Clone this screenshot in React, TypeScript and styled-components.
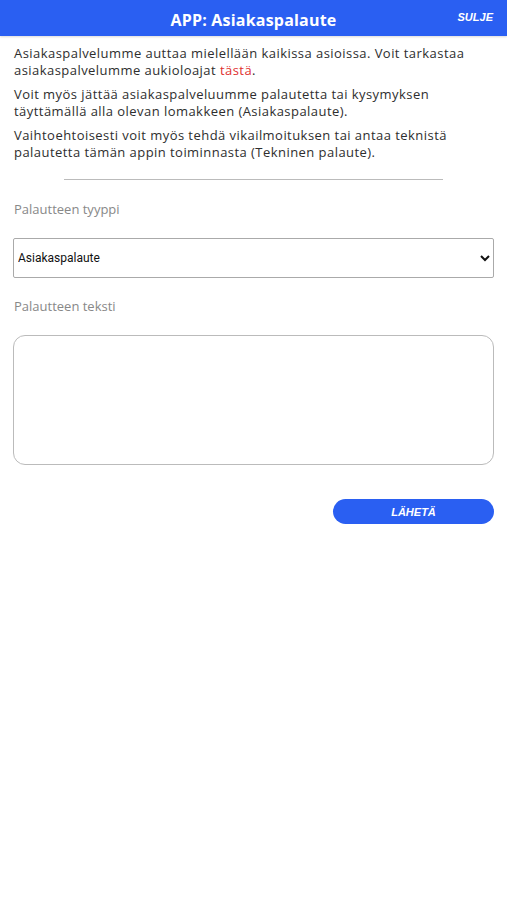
import React from 'react';
import styled, { createGlobalStyle } from 'styled-components';

const GlobalStyle = createGlobalStyle`
  html, body {
    margin: 0;
    padding: 0;
    background: #ffffff;
  }
  body {
    font-family: 'Open Sans', 'Liberation Sans', sans-serif;
    color: #333;
  }
`;

const App: React.FC = () => {
  return <>
    <GlobalStyle />
    <Header>
      <HeaderTitle>APP: Asiakaspalaute</HeaderTitle>
      <CloseButton type="button">SULJE</CloseButton>
    </Header>
    <Content>
      <Paragraph>
        Asiakaspalvelumme auttaa mielellään kaikissa asioissa. Voit tarkastaa asiakaspalvelumme aukioloajat <RedLink href="#">tästä</RedLink>.
      </Paragraph>
      <Paragraph>
        Voit myös jättää asiakaspalveluumme palautetta tai kysymyksen täyttämällä alla olevan lomakkeen (Asiakaspalaute).
      </Paragraph>
      <Paragraph>
        Vaihtoehtoisesti voit myös tehdä vikailmoituksen tai antaa teknistä palautetta tämän appin toiminnasta (Tekninen palaute).
      </Paragraph>
      <Divider />
      <FieldLabel>Palautteen tyyppi</FieldLabel>
      <Select defaultValue="asiakas">
        <option value="asiakas">Asiakaspalaute</option>
        <option value="tekninen">Tekninen palaute</option>
      </Select>
      <FieldLabel>Palautteen teksti</FieldLabel>
      <TextArea />
      <ButtonRow>
        <SendButton type="button">LÄHETÄ</SendButton>
      </ButtonRow>
    </Content>
  </>;
};

export default App;

const Header = styled.div`
  position: relative;
  height: 36px;
  background-color: #2a5ff2;
  display: flex;
  align-items: center;
  justify-content: center;
  box-shadow: 0 1px 2px rgba(0, 0, 0, 0.15);
`;

const HeaderTitle = styled.span`
  color: #fff;
  font-weight: 700;
  font-size: 16px;
  letter-spacing: 0.2px;
  margin-top: 4px;
`;

const CloseButton = styled.button`
  position: absolute;
  right: 14px;
  top: 11px;
  background: none;
  border: none;
  padding: 0;
  color: #fff;
  font-family: 'Liberation Sans', Arial, sans-serif;
  font-style: italic;
  font-weight: 700;
  font-size: 11px;
`;

const Content = styled.div`
  padding: 9px 13px 0 13px;
`;

const Paragraph = styled.p`
  margin: 0 0 7px 1px;
  font-size: 13px;
  line-height: 17px;
  letter-spacing: 0.45px;
  color: #2e2e2e;
`;

const RedLink = styled.a`
  color: #e0302f;
  text-decoration: none;
`;

const Divider = styled.hr`
  width: 379px;
  margin: 18px auto 20px auto;
  border: none;
  border-top: 1px solid #bbb;
`;

const FieldLabel = styled.div`
  margin-left: 1px;
  font-size: 13px;
  line-height: 18px;
  color: #888;
  margin-bottom: 20px;
`;

const Select = styled.select`
  display: block;
  width: 100%;
  height: 40px;
  border: 1px solid #aaa;
  border-radius: 2px;
  background: #fff;
  font-family: Roboto, 'Liberation Sans', sans-serif;
  font-size: 12px;
  color: #111;
  padding: 0;
  margin-bottom: 19px;
`;

const TextArea = styled.textarea`
  display: block;
  box-sizing: border-box;
  width: 100%;
  height: 130px;
  border: 1px solid #bbb;
  border-radius: 12px;
  resize: none;
`;

const ButtonRow = styled.div`
  display: flex;
  justify-content: flex-end;
  margin-top: 34px;
`;

const SendButton = styled.button`
  width: 161px;
  height: 25px;
  border: none;
  border-radius: 13px;
  background-color: #2a5ff2;
  color: #fff;
  font-family: 'Liberation Sans', Arial, sans-serif;
  font-style: italic;
  font-weight: 700;
  font-size: 11px;
`;
